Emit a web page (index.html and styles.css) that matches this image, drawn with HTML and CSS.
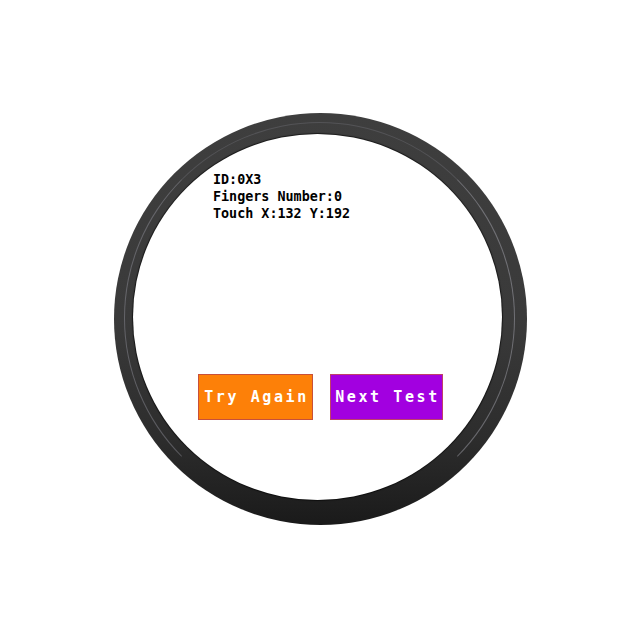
FILE: index.html
```html
<!DOCTYPE html>
<html>
<head>
<meta charset="utf-8">
<link rel="stylesheet" href="styles.css">
</head>
<body>
<div class="screen">
  <div class="ring">
    <div class="face">
      <div class="info">
        <div>ID:0X3</div>
        <div>Fingers Number:0</div>
        <div>Touch X:132 Y:192</div>
      </div>
      <div class="buttons">
        <div class="btn btn-try">Try Again</div>
        <div class="btn btn-next">Next Test</div>
      </div>
    </div>
  </div>
</div>
</body>
</html>
```

FILE: styles.css
```css
html, body {
  margin: 0;
  padding: 0;
  background: #ffffff;
}
.screen {
  width: 640px;
  height: 640px;
  box-sizing: border-box;
  padding: 113px 0 0 114px;
  display: flex;
  align-items: flex-start;
}
.ring {
  position: relative;
  width: 413px;
  height: 412px;
  box-sizing: border-box;
  padding: 21px 25px 25px 19px;
  border-radius: 50%;
  background: linear-gradient(180deg, #3e3e3e 0%, #3a3a3a 50%, #2c2c2c 80%, #1a1a1a 100%);
  display: flex;
}
.ring::before {
  content: "";
  position: absolute;
  top: 9px;
  left: 10px;
  right: 12px;
  bottom: 11px;
  border-radius: 50%;
  border: 1px solid rgba(215, 215, 230, 0.35);
  border-top-color: rgba(215, 215, 230, 0.15);
  border-bottom-color: transparent;
  border-left-color: rgba(200, 200, 215, 0.3);
}
.face {
  flex: 1;
  border-radius: 50%;
  background: #ffffff;
  box-shadow: 0 0 1px 1px rgba(0,0,0,0.6);
  display: flex;
  flex-direction: column;
  padding: 37px 0 0 65px;
  box-sizing: border-box;
}
.info {
  padding-left: 15px;
  font-family: "DejaVu Sans Mono", "Liberation Mono", monospace;
  font-weight: bold;
  font-size: 13.4px;
  line-height: 17px;
  color: #000000;
}
.buttons {
  display: flex;
  gap: 17px;
  margin-top: 152px;
}
.btn {
  height: 46px;
  box-sizing: border-box;
  display: flex;
  align-items: center;
  justify-content: center;
  font-family: "DejaVu Sans Mono", "Liberation Mono", monospace;
  font-weight: bold;
  font-size: 15px;
  letter-spacing: 2.6px;
  color: #ffffff;
  padding-left: 2px;
}
.btn-try {
  width: 115px;
  background: #fd8008;
  border: 1px solid #c8503a;
}
.btn-next {
  width: 113px;
  background: #a200e0;
  border: 1px solid #c0406a;
}
```
